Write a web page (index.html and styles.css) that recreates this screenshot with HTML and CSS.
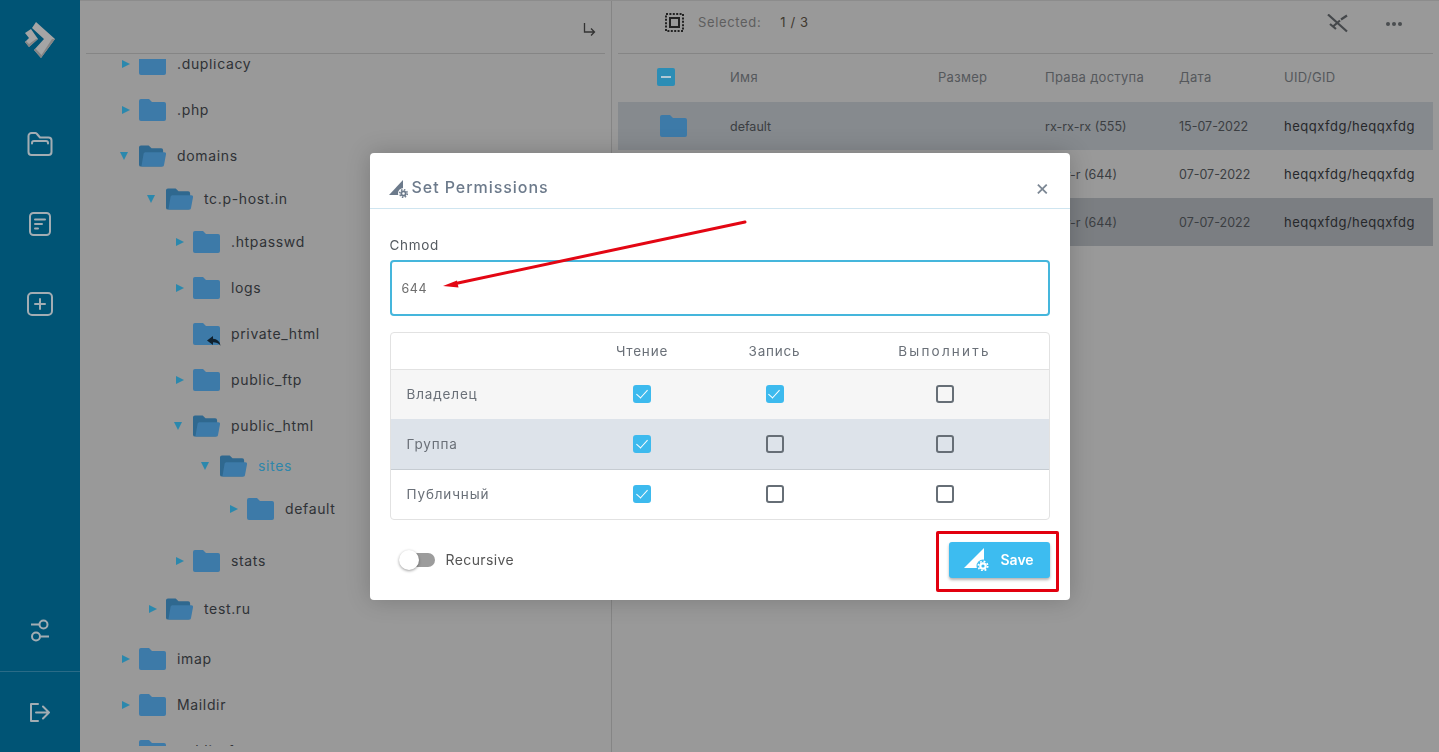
FILE: index.html
```html
<!DOCTYPE html>
<html lang="ru">
<head>
  <meta charset="UTF-8" />
  <meta name="viewport" content="width=device-width, initial-scale=1.0" />
  <title>Set Permissions</title>
  <link rel="stylesheet" href="styles.css">
</head>
<body>
  <svg class="sprite" aria-hidden="true">
    <symbol id="folder" viewBox="0 0 27 22">
      <path d="M2 0h8l3 3h12a2 2 0 0 1 2 2v15a2 2 0 0 1-2 2H2a2 2 0 0 1-2-2V2a2 2 0 0 1 2-2z" />
    </symbol>
    <symbol id="folder-open" viewBox="0 0 28 22">
      <path class="folder-back" d="M2 0h8l3 3h10a2 2 0 0 1 2 2v15a2 2 0 0 1-2 2H2a2 2 0 0 1-2-2V2a2 2 0 0 1 2-2z" />
      <path d="M6.500 7H26a2 2 0 0 1 2 2.300L26 20a2 2 0 0 1-2 2H2.500L4.800 8.500A2 2 0 0 1 6.500 7z" />
    </symbol>
  </svg>

  <div class="app">
    <nav class="sidebar">
      <svg class="logo" viewBox="0 0 31 36" width="31" height="36">
        <path class="logo-light" d="M11 0l19 17-14 19-7-8 10-11L7 6z" />
        <path class="logo-dark" d="M30 17L16 36l-7-8 1.500-1.500 6 6.500L27 17z" />
        <path class="logo-light" d="M6 7l7 10-9 8-4-5 4-4-4-5z" />
        <path class="logo-dark" d="M13 17l-9 8-4-5 1-1 3 3 7-5z" />
      </svg>
      <div class="side-icons">
        <svg viewBox="0 0 26 24" width="26" height="24">
          <path d="M1.500 6V20a3 3 0 0 0 3 3h17a3 3 0 0 0 3-3V8.500a3 3 0 0 0-3-3H13L10 2a2 2 0 0 0-1.500-1H4.500a3 3 0 0 0-3 3z" />
          <path d="M5 11.500V11a2 2 0 0 1 2-2h12a2 2 0 0 1 2 2v.5" />
        </svg>
        <svg viewBox="0 0 22 24" width="22" height="24">
          <rect x="1" y="1" width="20" height="22" rx="3.500" />
          <path d="M6 7.500h10M6 12h7M6 16.500h3" />
        </svg>
        <svg viewBox="0 0 26 24" width="26" height="24">
          <rect x="1" y="1" width="24" height="22" rx="4" />
          <path d="M13 7v10M8 12h10" />
        </svg>
      </div>
      <div class="side-bottom">
        <svg class="side-settings" viewBox="0 0 18 23" width="18" height="23">
          <circle cx="12.500" cy="5.500" r="4" />
          <path d="M0 5.500h8M10 17.500h8" />
          <circle cx="5" cy="17.500" r="4" />
        </svg>
        <div class="side-logout">
          <svg viewBox="0 0 20 19" width="20" height="19">
            <path d="M8 1H1v17h7M6 9.500h13M13 3.500l6 6-6 6" />
          </svg>
        </div>
      </div>
    </nav>

    <section class="tree-panel">
      <header class="tree-head">
        <svg viewBox="0 0 13 14" width="13" height="14"><path d="M1.500 1v9h10M8 6.500l3.500 3.500L8 13.500" /></svg>
      </header>
      <div class="tree-scroll">
        <ul class="tree tree-root">
          <li><div class="row"><i class="arrow"></i><svg class="fld"><use href="#folder" /></svg><span>.duplicacy</span></div></li>
          <li><div class="row"><i class="arrow"></i><svg class="fld"><use href="#folder" /></svg><span>.php</span></div></li>
          <li>
            <div class="row"><i class="arrow down"></i><svg class="fld"><use href="#folder-open" /></svg><span>domains</span></div>
            <ul class="tree">
              <li>
                <div class="row gap-13"><i class="arrow down"></i><svg class="fld"><use href="#folder-open" /></svg><span>tc.p-host.in</span></div>
                <ul class="tree">
                  <li><div class="row gap-13"><i class="arrow"></i><svg class="fld"><use href="#folder" /></svg><span>.htpasswd</span></div></li>
                  <li><div class="row"><i class="arrow"></i><svg class="fld"><use href="#folder" /></svg><span>logs</span></div></li>
                  <li>
                    <div class="row"><i class="arrow none"></i>
                      <span class="fld-wrap">
                        <svg class="fld"><use href="#folder" /></svg>
                        <svg class="link-mark" viewBox="0 0 14 10" width="14" height="10"><path d="M6 0L0 4.500 6 9V6.200c3 0 5.500.8 7.500 3.500C13 5.500 10 3 6 2.800z" /></svg>
                      </span>
                      <span>private_html</span>
                    </div>
                  </li>
                  <li><div class="row"><i class="arrow"></i><svg class="fld"><use href="#folder" /></svg><span>public_ftp</span></div></li>
                  <li>
                    <div class="row"><i class="arrow down"></i><svg class="fld"><use href="#folder-open" /></svg><span>public_html</span></div>
                    <ul class="tree">
                      <li>
                        <div class="row gap-10 current"><i class="arrow down"></i><svg class="fld"><use href="#folder-open" /></svg><span>sites</span></div>
                        <ul class="tree">
                          <li><div class="row gap-13"><i class="arrow"></i><svg class="fld"><use href="#folder" /></svg><span>default</span></div></li>
                        </ul>
                      </li>
                    </ul>
                  </li>
                  <li><div class="row gap-22"><i class="arrow"></i><svg class="fld"><use href="#folder" /></svg><span>stats</span></div></li>
                </ul>
              </li>
              <li><div class="row gap-18"><i class="arrow"></i><svg class="fld"><use href="#folder-open" /></svg><span>test.ru</span></div></li>
            </ul>
          </li>
          <li><div class="row gap-20"><i class="arrow"></i><svg class="fld"><use href="#folder" /></svg><span>imap</span></div></li>
          <li><div class="row"><i class="arrow"></i><svg class="fld"><use href="#folder" /></svg><span>Maildir</span></div></li>
          <li><div class="row"><i class="arrow"></i><svg class="fld"><use href="#folder" /></svg><span>public_ftp</span></div></li>
        </ul>
      </div>
    </section>

    <section class="files-panel">
      <header class="files-bar">
        <svg class="select-icon" viewBox="0 0 19 19" width="19" height="19">
          <rect class="dots" x="1" y="1" width="17" height="17" />
          <rect x="5" y="5" width="9" height="9" />
        </svg>
        <span class="sel-label">Selected:</span>
        <span class="sel-count">1 / 3</span>
        <svg class="bar-unlink" viewBox="0 0 23 19" width="23" height="19">
          <path d="M1 0.500L20 17.500M3 10l6 5M6 12.500L13 6.500M14 5.500L20 1.500" />
        </svg>
        <svg class="bar-more" viewBox="0 0 16 4" width="16" height="4">
          <circle cx="2" cy="2" r="2" /><circle cx="8" cy="2" r="2" /><circle cx="14" cy="2" r="2" />
        </svg>
      </header>
      <div class="file-row file-head">
        <span class="cell-check"><i class="minus-box"></i></span>
        <span>Имя</span><span>Размер</span><span>Права доступа</span><span>Дата</span><span>UID/GID</span>
      </div>
      <div class="file-row selected">
        <span class="cell-check"><svg class="fld"><use href="#folder" /></svg></span>
        <span>default</span><span></span><span>rx-rx-rx (555)</span><span>15-07-2022</span><span class="owner">heqqxfdg/heqqxfdg</span>
      </div>
      <div class="file-row">
        <span class="cell-check"></span>
        <span></span><span></span><span>rw-r-r (644)</span><span>07-07-2022</span><span class="owner">heqqxfdg/heqqxfdg</span>
      </div>
      <div class="file-row selected-dark">
        <span class="cell-check"></span>
        <span></span><span></span><span>rw-r-r (644)</span><span>07-07-2022</span><span class="owner">heqqxfdg/heqqxfdg</span>
      </div>
    </section>
  </div>

  <div class="backdrop">
    <div class="dialog">
      <div class="dialog-head">
        <svg class="perm-icon" viewBox="0 0 20 19" width="20" height="19">
          <path d="M0 15L14 0v15z" />
          <circle class="knock" cx="14.500" cy="13.500" r="5.500" />
          <circle class="gear" cx="14.500" cy="13.500" r="2.200" />
          <circle class="teeth" cx="14.500" cy="13.500" r="3.800" />
        </svg>
        <h2>Set Permissions</h2>
        <span class="close">×</span>
      </div>
      <div class="dialog-body">
        <label class="field-label">Chmod</label>
        <div class="chmod-input">644</div>
        <div class="perm-table">
          <div class="perm-row perm-top"><span></span><span>Чтение</span><span>Запись</span><span class="wide">Выполнить</span></div>
          <div class="perm-row owner-row">
            <span>Владелец</span>
            <span><i class="cb on"></i></span><span><i class="cb on"></i></span><span><i class="cb"></i></span>
          </div>
          <div class="perm-row group-row">
            <span>Группа</span>
            <span><i class="cb on"></i></span><span><i class="cb"></i></span><span><i class="cb"></i></span>
          </div>
          <div class="perm-row public-row">
            <span>Публичный</span>
            <span><i class="cb on"></i></span><span><i class="cb"></i></span><span><i class="cb"></i></span>
          </div>
        </div>
        <div class="dialog-foot">
          <span class="toggle"><i></i></span>
          <span class="toggle-label">Recursive</span>
          <button class="save-btn">
            <svg viewBox="0 0 27 23" width="27" height="23">
              <path d="M0 20L20 0v20z" />
              <circle class="knock" cx="19" cy="18" r="6.500" />
              <circle class="gear" cx="19" cy="18" r="2.700" />
              <circle class="teeth" cx="19" cy="18" r="4.700" />
            </svg>
            <span>Save</span>
          </button>
        </div>
      </div>
    </div>
    <div class="save-mark"></div>
    <svg class="note-arrow" viewBox="0 0 1439 752" width="1439" height="752">
      <path class="note-line" d="M745 222L458 283" />
      <path class="note-head" d="M443 286L457 280.500l1.500 7z" />
    </svg>
  </div>
</body>
</html>
```

FILE: styles.css
```css
* { box-sizing: border-box; }
html, body { height: 100%; margin: 0; }
body {
  font-family: Inter, "Noto Sans", sans-serif;
  background: #999;
  color: #2f3236;
  overflow: hidden;
}
ul { list-style: none; margin: 0; padding: 0; }
i { display: block; }
.sprite { display: none; }

.app { display: flex; height: 752px; border-top: 1px solid #8c8c8c; }

/* left rail */
.sidebar {
  width: 80px; flex: none; display: flex; flex-direction: column; align-items: center;
  background: #005475;
  margin-top: -1px;
}
.sidebar svg { display: block; fill: none; stroke: #a3adb3; stroke-width: 2; stroke-linecap: round; stroke-linejoin: round; }
.sidebar .logo { margin-top: 22px; stroke: none; }
.logo-light { fill: #a5a5a5; }
.logo-dark { fill: #858585; }
.side-icons { display: flex; flex-direction: column; align-items: center; gap: 56px; margin-top: 74px; }
.side-bottom { margin-top: auto; width: 100%; display: flex; flex-direction: column; align-items: center; }
.side-settings { margin-bottom: 29px; }
.side-logout {
  width: 100%; height: 81px; padding-top: 31px;
  display: flex; justify-content: center; align-items: flex-start;
  border-top: 1px solid #2a6b87;
}

/* folder tree */
.tree-panel { width: 532px; flex: none; border-right: 1px solid #858585; }
.tree-head {
  height: 53px; margin: 0 6px; display: flex; justify-content: flex-end; align-items: flex-end;
  padding: 0 9px 17px 0; border-bottom: 1px solid #858585;
}
.tree-head svg { fill: none; stroke: #333; stroke-width: 1.300; }
.tree-scroll { height: 687px; margin-top: 5px; overflow: hidden; }
.tree-root { margin-top: -26px; padding-left: 38px; }
.tree .tree { padding-left: 27px; }
.row { display: flex; align-items: center; height: 30px; margin-top: 16px; font-size: 14px; letter-spacing: .65px; color: #2f3236; }
.row > span:last-child { margin-top: -2px; }
.gap-10 { margin-top: 10px; }
.gap-13 { margin-top: 13px; }
.gap-18 { margin-top: 18px; }
.gap-20 { margin-top: 20px; }
.gap-22 { margin-top: 22px; }
.current { color: #2f86ab; }
.arrow {
  width: 21px; height: 0; flex: none; position: relative;
}
.arrow::before {
  content: ""; position: absolute; left: 4px; top: -4px;
  border-left: 8px solid #2b88ad; border-top: 4px solid transparent; border-bottom: 4px solid transparent;
}
.arrow.down::before {
  left: 2px; top: -4px;
  border-top: 8px solid #2b88ad; border-left: 4.500px solid transparent; border-right: 4.500px solid transparent; border-bottom: 0;
}
.arrow.none::before { display: none; }
.fld { width: 27px; height: 22px; flex: none; margin-right: 11px; fill: #3d7aa8; }
.folder-back { fill: #2f688f; }
.fld-wrap { position: relative; display: flex; flex: none; }
.link-mark { position: absolute; left: 14px; top: 13px; fill: #10212e; }

/* file list */
.files-panel { flex: 1; padding: 0 6px; min-width: 0; }
.files-bar { height: 53px; display: flex; align-items: center; border-bottom: 1px solid #858585; padding-bottom: 10px; }
.select-icon { margin-left: 47px; fill: none; stroke: #222; stroke-width: 2; }
.select-icon .dots { stroke-dasharray: 2 1.400; }
.sel-label { margin-left: 14px; font-size: 13px; color: #5e5e5e; letter-spacing: .65px; }
.sel-count { margin-left: 19px; font-size: 13px; color: #40382f; letter-spacing: .6px; }
.bar-unlink { margin-left: auto; margin-top: 3px; fill: none; stroke: #45484b; stroke-width: 2.200; }
.bar-more { margin-left: 36px; margin-right: 31px; margin-top: 3px; fill: #4a4d50; }
.file-row {
  display: grid; grid-template-columns: 112px 208px 107px 134px 105px 1fr; align-items: center;
  height: 48px; font-size: 12.500px; color: #3b3e42;
}
.file-head { color: #55585c; letter-spacing: .3px; font-size: 13px; padding-bottom: 2px; }
.selected { background: #868a8e; }
.selected-dark { background: #7b7e82; }
.owner { font-size: 13px; color: #26282b; letter-spacing: .5px; white-space: nowrap; }
.cell-check { display: flex; padding-left: 39px; }
.cell-check .fld { margin-left: 3px; }
.minus-box { width: 18px; height: 18px; border-radius: 2px; background: #2c8db5; position: relative; }
.minus-box::after { content: ""; position: absolute; left: 4px; right: 4px; top: 8px; height: 2px; background: #b0c8d4; }

/* dialog */
.backdrop { position: fixed; inset: 0; display: flex; align-items: center; justify-content: center; }
.dialog { width: 700px; height: 447px; background: #fff; border-radius: 4px; box-shadow: 0 0 24px rgba(0, 0, 0, .2); }
.dialog-head { height: 56px; display: flex; align-items: center; padding: 13px 20px 0 19px; border-bottom: 1px solid #cfe5f0; }
.perm-icon { fill: #6c7a8b; margin-top: 5px; }
.knock { fill: #fff; }
.gear { fill: none; stroke: #6c7a8b; stroke-width: 1.800; }
.teeth { fill: none; stroke: #6c7a8b; stroke-width: 1.500; stroke-dasharray: 1.500 1.480; }
.dialog-head h2 { margin: 0 0 0 3px; font-size: 16px; font-weight: 500; color: #6c7a8b; letter-spacing: .95px; }
.close { margin-left: auto; font-size: 22px; line-height: 1; color: #7c8794; }
.dialog-body { padding: 28px 20px 0; }
.field-label { display: block; font-size: 13.500px; line-height: 16px; color: #555b61; letter-spacing: .7px; }
.chmod-input {
  height: 56px; margin-top: 7px; padding: 1px 10px 0; display: flex; align-items: center;
  border: 2px solid #45b6dc; border-radius: 4px; font-size: 12.500px; letter-spacing: .6px; color: #6e6e6e;
}
.perm-table { margin-top: 16px; border: 1px solid #e2e2e2; border-radius: 4px; overflow: hidden; }
.perm-row {
  display: grid; grid-template-columns: 185px 133px 132px 1fr; align-items: center; height: 50px;
  font-size: 13.500px; letter-spacing: .85px; color: #6a7078;
}
.perm-row > span { display: flex; justify-content: center; }
.perm-row > span:first-child { justify-content: flex-start; padding-left: 16px; }
.perm-top { height: 36px; }
.perm-top > span { font-size: 13.500px; letter-spacing: .8px; }
.perm-top > .wide { letter-spacing: 2.200px; }
.owner-row { background: #f6f6f6; border-top: 1px solid #e2e2e2; }
.group-row { background: #dde3ea; height: 51px; border-bottom: 1px solid #c6ccd2; }
.public-row { height: 49px; }
.cb { width: 18px; height: 18px; border: 2px solid #666e76; border-radius: 3px; position: relative; }
.cb.on { background: #3dbaee; border-color: #3dbaee; }
.cb.on::after {
  content: ""; position: absolute; left: 3.500px; top: 0; width: 5px; height: 10px;
  border: solid #fff; border-width: 0 1.800px 1.800px 0; transform: rotate(42deg);
}
.dialog-foot { display: flex; align-items: center; margin-top: 22px; height: 36px; }
.toggle { width: 36px; height: 20px; margin-left: 9px; position: relative; flex: none; display: block; }
.toggle::before { content: ""; position: absolute; left: 6px; right: 0; top: 3px; bottom: 3px; border-radius: 7px; background: #9c9c9c; }
.toggle i { position: absolute; left: 0; top: 0; width: 20px; height: 20px; border-radius: 50%; background: #fff; box-shadow: 0 1px 3px rgba(0, 0, 0, .4); }
.toggle-label { margin-left: 11px; margin-top: -1px; font-size: 14px; color: #555; letter-spacing: .4px; }
.save-btn {
  margin-left: auto; width: 101px; height: 36px; padding: 0 0 0 15px; display: flex; align-items: center;
  border: 0; border-radius: 3px; background: #3dbcf0; color: #fff;
  font: 600 14px Inter, "Noto Sans", sans-serif;
  box-shadow: 0 2px 3px rgba(0, 0, 0, .3);
}
.save-btn svg { fill: #fff; flex: none; }
.save-btn .knock { fill: #3dbcf0; }
.save-btn .gear { stroke: #fff; stroke-width: 2.200; }
.save-btn .teeth { stroke: #fff; stroke-width: 1.700; stroke-dasharray: 1.850 1.840; }
.save-btn span { margin-left: 10px; }

/* red annotations drawn over the shot */
.save-mark { position: absolute; left: 936px; top: 531px; width: 123px; height: 61px; border: 3px solid #e2000f; border-radius: 2px; }
.note-arrow { position: absolute; left: 0; top: 0; pointer-events: none; }
.note-line { fill: none; stroke: #e30613; stroke-width: 3; stroke-linecap: round; }
.note-head { fill: #e30613; }
```
